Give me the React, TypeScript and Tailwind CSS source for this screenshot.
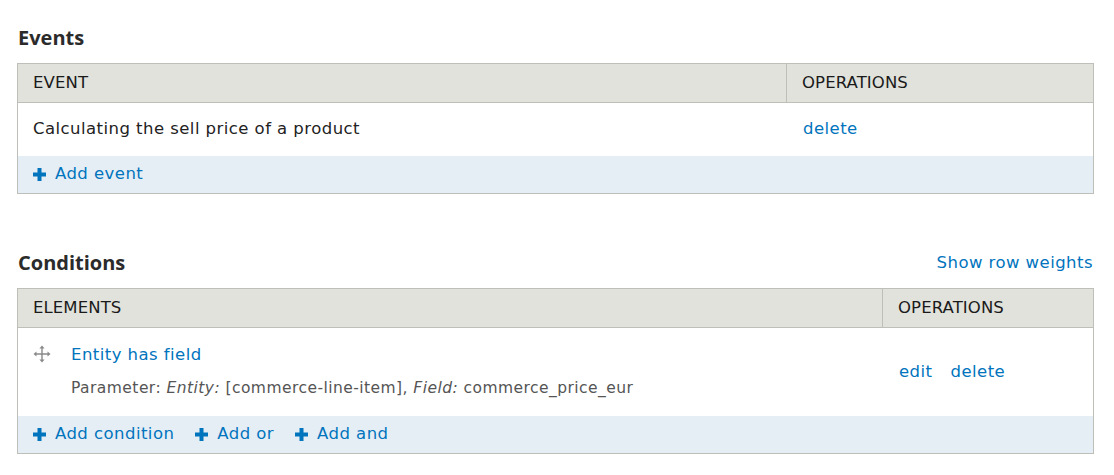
import type { ReactNode } from 'react';

const BODY_FONT = { fontFamily: '"DejaVu Sans", Verdana, sans-serif' };
const HEAD_FONT = { fontFamily: '"Open Sans", "Noto Sans", Arial, sans-serif' };

const PlusIcon = () => (
  <svg width="13" height="13" viewBox="0 0 13 13" className="shrink-0">
    <path d="M4.5 0h4v4.5H13v4H8.5V13h-4V8.5H0v-4h4.5z" fill="#0074bd" />
  </svg>
);

const DragHandle = () => (
  <svg width="18" height="18" viewBox="0 0 18 18" className="shrink-0">
    <g stroke="#8a8a8a" strokeWidth="1.4" fill="none">
      <path d="M9 2v14M2 9h14" />
    </g>
    <g fill="#8a8a8a">
      <path d="M9 0.5l2.6 3H6.4z" />
      <path d="M9 17.5l2.6-3H6.4z" />
      <path d="M0.5 9l3-2.6v5.2z" />
      <path d="M17.5 9l-3-2.6v5.2z" />
    </g>
  </svg>
);

const AddLink = ({ label }: { label: string }) => (
  <a href="#" className="flex items-center gap-[9px] text-[#0074bd] no-underline">
    <PlusIcon />
    <span>{label}</span>
  </a>
);

type HeadProps = { title: string; right?: ReactNode };

const SectionHeading = ({ title, right }: HeadProps) => (
  <div className="flex items-center justify-between h-[24px] mb-[13px]">
    <h2 className="text-[20px] leading-[24px] font-bold tracking-normal text-[#2b2b2b] pl-px" style={HEAD_FONT}>
      {title}
    </h2>
    {right}
  </div>
);

export default function App() {
  return (
    <div
      className="bg-white min-h-screen pt-[26px] pl-[17px] pr-[20px] text-[16.5px] tracking-[0.45px] text-[#222]"
      style={BODY_FONT}
    >
      {/* Events */}
      <SectionHeading title="Events" />
      <div className="border border-[#bfbfba]">
        <div className="flex h-[39px] bg-[#e1e2dc] border-b border-[#bfbfba] text-[#1a1a1a] tracking-[0.1px]">
          <div className="w-[769px] px-[15px] flex items-center border-r border-[#bfbfba]">EVENT</div>
          <div className="flex-1 px-[15px] flex items-center">OPERATIONS</div>
        </div>
        <div className="flex h-[53px] bg-white">
          <div className="w-[770px] px-[15px] flex items-center">Calculating the sell price of a product</div>
          <div className="flex-1 px-[15px] flex items-center">
            <a href="#" className="text-[#0074bd]">delete</a>
          </div>
        </div>
        <div className="h-[37px] bg-[#e6eef5] px-[15px] flex items-center">
          <AddLink label="Add event" />
        </div>
      </div>

      {/* Conditions */}
      <div className="mt-[57px]">
        <SectionHeading
          title="Conditions"
          right={
            <a href="#" className="text-[#0074bd] pr-px">Show row weights</a>
          }
        />
        <div className="border border-[#bfbfba]">
          <div className="flex h-[39px] bg-[#e1e2dc] border-b border-[#bfbfba] text-[#1a1a1a] tracking-[0.1px]">
            <div className="w-[865px] px-[15px] flex items-center border-r border-[#bfbfba]">ELEMENTS</div>
            <div className="flex-1 px-[15px] flex items-center">OPERATIONS</div>
          </div>
          <div className="flex h-[88px] bg-white">
            <div className="w-[866px] pl-[15px] pt-[15px] flex gap-[20px]">
              <div className="pt-[2px]">
                <DragHandle />
              </div>
              <div className="flex flex-col">
                <a href="#" className="text-[#0074bd] leading-[24px]">Entity has field</a>
                <div className="mt-[11px] text-[15.5px] leading-[20px] text-[#555]">
                  Parameter: <em>Entity:</em> [commerce-line-item], <em>Field:</em> commerce_price_eur
                </div>
              </div>
            </div>
            <div className="flex-1 px-[15px] flex items-center gap-[18px]">
              <a href="#" className="text-[#0074bd]">edit</a>
              <a href="#" className="text-[#0074bd]">delete</a>
            </div>
          </div>
          <div className="h-[37px] bg-[#e6eef5] px-[15px] flex items-center gap-[21px]">
            <AddLink label="Add condition" />
            <AddLink label="Add or" />
            <AddLink label="Add and" />
          </div>
        </div>
      </div>
    </div>
  );
}
